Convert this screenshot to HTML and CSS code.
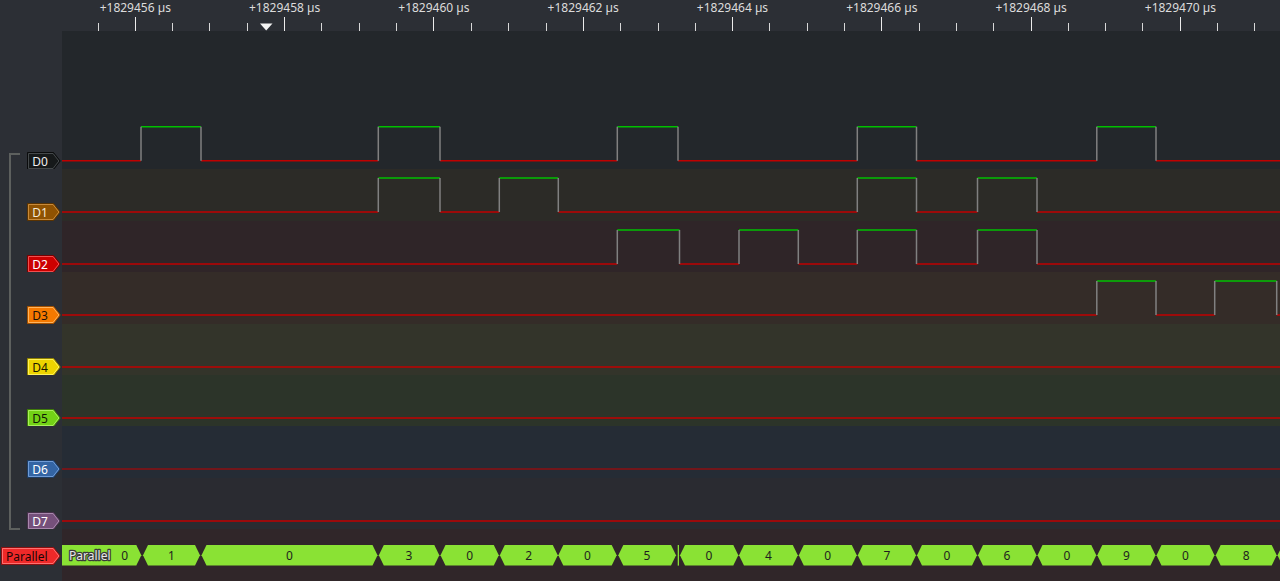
FILE: index.html
```html
<!DOCTYPE html>
<html>
<head>
<meta charset="utf-8">
<link rel="stylesheet" href="styles.css">
</head>
<body>
<div class="app">
  <div class="ruler">
    <svg width="1280" height="31" viewBox="0 0 1280 31">
      <g class="ticks-minor">
        <path d="M98.5 23V31 M172.5 23V31 M209.5 23V31 M247.5 23V31 M321.5 23V31 M359.5 23V31 M396.5 23V31 M471.5 23V31 M508.5 23V31 M546.5 23V31 M620.5 23V31 M658.5 23V31 M695.5 23V31 M769.5 23V31 M807.5 23V31 M844.5 23V31 M919.5 23V31 M956.5 23V31 M993.5 23V31 M1068.5 23V31 M1105.5 23V31 M1142.5 23V31 M1217.5 23V31 M1254.5 23V31"/>
      </g>
      <g class="ticks-major">
        <path d="M135.5 17V31 M284.5 17V31 M433.5 17V31 M583.5 17V31 M732.5 17V31 M881.5 17V31 M1031.5 17V31 M1180.5 17V31"/>
      </g>
      <g class="ruler-text">
        <text x="135.3" y="12">+1829456 µs</text>
        <text x="284.6" y="12">+1829458 µs</text>
        <text x="433.9" y="12">+1829460 µs</text>
        <text x="583.2" y="12">+1829462 µs</text>
        <text x="732.5" y="12">+1829464 µs</text>
        <text x="881.8" y="12">+1829466 µs</text>
        <text x="1031.1" y="12">+1829468 µs</text>
        <text x="1180.4" y="12">+1829470 µs</text>
      </g>
      <polygon class="marker" points="260,23.5 272.5,23.5 266.2,30.5"/>
    </svg>
  </div>

  <div class="traces">
    <div class="bracket"></div>

    <div class="row row-d0">
      <div class="lab lab-d0">
        <svg class="tag tag-d0" width="34" height="18" viewBox="0 0 34 18"><polygon class="o" points="0.5,0.5 26.5,0.5 33.2,9 26.5,17.5 0.5,17.5"/><polygon class="h" points="1.5,1.5 26,1.5 31.9,9 26,16.5 1.5,16.5"/><text x="5.3" y="13.6">D0</text></svg>
      </div>
      <div class="band band-d0">
        <svg width="1218" height="139" viewBox="0 0 1218 139">
          <path class="lo" d="M0 129.7H79 M139 129.7H316.3 M378 129.7H555.3 M616 129.7H795.3 M854.5 129.7H1034.8 M1094 129.7H1218"/>
          <path class="hi" d="M79 95.7H139 M316.3 95.7H378 M555.3 95.7H616 M795.3 95.7H854.5 M1034.8 95.7H1094"/>
          <path class="ed" d="M79 95.7V129.7 M139 95.7V129.7 M316.3 95.7V129.7 M378 95.7V129.7 M555.3 95.7V129.7 M616 95.7V129.7 M795.3 95.7V129.7 M854.5 95.7V129.7 M1034.8 95.7V129.7 M1094 95.7V129.7"/>
        </svg>
      </div>
    </div>

    <div class="row">
      <div class="lab">
        <svg class="tag tag-d1" width="34" height="18" viewBox="0 0 34 18"><polygon class="o" points="0.5,0.5 26.5,0.5 33.2,9 26.5,17.5 0.5,17.5"/><polygon class="h" points="1.5,1.5 26,1.5 31.9,9 26,16.5 1.5,16.5"/><text x="5.3" y="13.6">D1</text></svg>
      </div>
      <div class="band band-d1">
        <svg width="1218" height="52" viewBox="0 0 1218 52">
          <path class="lo" d="M0 43H316.3 M378 43H437.3 M496.3 43H795.3 M854.5 43H915.5 M975 43H1218"/>
          <path class="hi" d="M316.3 9H378 M437.3 9H496.3 M795.3 9H854.5 M915.5 9H975"/>
          <path class="ed" d="M316.3 9V43 M378 9V43 M437.3 9V43 M496.3 9V43 M795.3 9V43 M854.5 9V43 M915.5 9V43 M975 9V43"/>
        </svg>
      </div>
    </div>

    <div class="row">
      <div class="lab">
        <svg class="tag tag-d2" width="34" height="18" viewBox="0 0 34 18"><polygon class="o" points="0.5,0.5 26.5,0.5 33.2,9 26.5,17.5 0.5,17.5"/><polygon class="h" points="1.5,1.5 26,1.5 31.9,9 26,16.5 1.5,16.5"/><text x="5.3" y="13.6">D2</text></svg>
      </div>
      <div class="band band-d2">
        <svg width="1218" height="52" viewBox="0 0 1218 52">
          <path class="lo" d="M0 43H555.3 M617.5 43H677 M736.3 43H795.3 M854.5 43H915.5 M975 43H1218"/>
          <path class="hi" d="M555.3 9H617.5 M677 9H736.3 M795.3 9H854.5 M915.5 9H975"/>
          <path class="ed" d="M555.3 9V43 M617.5 9V43 M677 9V43 M736.3 9V43 M795.3 9V43 M854.5 9V43 M915.5 9V43 M975 9V43"/>
        </svg>
      </div>
    </div>

    <div class="row">
      <div class="lab">
        <svg class="tag tag-d3" width="34" height="18" viewBox="0 0 34 18"><polygon class="o" points="0.5,0.5 26.5,0.5 33.2,9 26.5,17.5 0.5,17.5"/><polygon class="h" points="1.5,1.5 26,1.5 31.9,9 26,16.5 1.5,16.5"/><text x="5.3" y="13.6">D3</text></svg>
      </div>
      <div class="band band-d3">
        <svg width="1218" height="52" viewBox="0 0 1218 52">
          <path class="lo" d="M0 43H1034.8 M1094 43H1152.7 M1214.7 43H1218"/>
          <path class="hi" d="M1034.8 9H1094 M1152.7 9H1214.7"/>
          <path class="ed" d="M1034.8 9V43 M1094 9V43 M1152.7 9V43 M1214.7 9V43"/>
        </svg>
      </div>
    </div>

    <div class="row">
      <div class="lab">
        <svg class="tag tag-d4" width="34" height="18" viewBox="0 0 34 18"><polygon class="o" points="0.5,0.5 26.5,0.5 33.2,9 26.5,17.5 0.5,17.5"/><polygon class="h" points="1.5,1.5 26,1.5 31.9,9 26,16.5 1.5,16.5"/><text x="5.3" y="13.6">D4</text></svg>
      </div>
      <div class="band band-d4">
        <svg width="1218" height="52" viewBox="0 0 1218 52"><path class="lo" d="M0 43H1218"/></svg>
      </div>
    </div>

    <div class="row">
      <div class="lab">
        <svg class="tag tag-d5" width="34" height="18" viewBox="0 0 34 18"><polygon class="o" points="0.5,0.5 26.5,0.5 33.2,9 26.5,17.5 0.5,17.5"/><polygon class="h" points="1.5,1.5 26,1.5 31.9,9 26,16.5 1.5,16.5"/><text x="5.3" y="13.6">D5</text></svg>
      </div>
      <div class="band band-d5">
        <svg width="1218" height="52" viewBox="0 0 1218 52"><path class="lo" d="M0 43H1218"/></svg>
      </div>
    </div>

    <div class="row">
      <div class="lab">
        <svg class="tag tag-d6" width="34" height="18" viewBox="0 0 34 18"><polygon class="o" points="0.5,0.5 26.5,0.5 33.2,9 26.5,17.5 0.5,17.5"/><polygon class="h" points="1.5,1.5 26,1.5 31.9,9 26,16.5 1.5,16.5"/><text x="5.3" y="13.6">D6</text></svg>
      </div>
      <div class="band band-d6">
        <svg width="1218" height="52" viewBox="0 0 1218 52"><path class="lo thin" d="M0 43H1218"/></svg>
      </div>
    </div>

    <div class="row">
      <div class="lab">
        <svg class="tag tag-d7" width="34" height="18" viewBox="0 0 34 18"><polygon class="o" points="0.5,0.5 26.5,0.5 33.2,9 26.5,17.5 0.5,17.5"/><polygon class="h" points="1.5,1.5 26,1.5 31.9,9 26,16.5 1.5,16.5"/><text x="5.3" y="13.6">D7</text></svg>
      </div>
      <div class="band band-d7">
        <svg width="1218" height="52" viewBox="0 0 1218 52"><path class="lo" d="M0 43H1218"/></svg>
      </div>
    </div>

    <div class="row row-par">
      <div class="lab lab-par">
        <svg class="tag tag-par" width="60" height="18" viewBox="0 0 60 18"><polygon class="o" points="0.5,0.5 52.5,0.5 59.2,9 52.5,17.5 0.5,17.5"/><polygon class="h" points="1.5,1.5 52,1.5 57.9,9 52,16.5 1.5,16.5"/><text x="5" y="13.6">Parallel</text></svg>
      </div>
      <div class="band band-par">
        <svg width="1218" height="53" viewBox="0 0 1218 53">
          <g class="seg">
            <polygon points="0,16 74.3,16 79.3,26.3 74.3,36.6 0,36.6"/>
            <polygon points="81,26.3 86,16 133,16 138,26.3 133,36.6 86,36.6"/>
            <polygon points="139.5,26.3 144.5,16 310.5,16 315.5,26.3 310.5,36.6 144.5,36.6"/>
            <polygon points="316.8,26.3 321.8,16 372.3,16 377.3,26.3 372.3,36.6 321.8,36.6"/>
            <polygon points="378.5,26.3 383.5,16 431.8,16 436.8,26.3 431.8,36.6 383.5,36.6"/>
            <polygon points="437.8,26.3 442.8,16 490.8,16 495.8,26.3 490.8,36.6 442.8,36.6"/>
            <polygon points="496.3,26.3 501.3,16 549.7,16 554.7,26.3 549.7,36.6 501.3,36.6"/>
            <polygon points="556.3,26.3 561.3,16 609,16 614,26.3 609,36.6 561.3,36.6"/>
            <rect x="615.7" y="16" width="1.3" height="20.6"/>
            <polygon points="618,26.3 623,16 671.3,16 676.3,26.3 671.3,36.6 623,36.6"/>
            <polygon points="677,26.3 682,16 730.8,16 735.8,26.3 730.8,36.6 682,36.6"/>
            <polygon points="736.8,26.3 741.8,16 789.8,16 794.8,26.3 789.8,36.6 741.8,36.6"/>
            <polygon points="795.8,26.3 800.8,16 849,16 854,26.3 849,36.6 800.8,36.6"/>
            <polygon points="855,26.3 860,16 910,16 915,26.3 910,36.6 860,36.6"/>
            <polygon points="916,26.3 921,16 969.5,16 974.5,26.3 969.5,36.6 921,36.6"/>
            <polygon points="975.5,26.3 980.5,16 1029.3,16 1034.3,26.3 1029.3,36.6 980.5,36.6"/>
            <polygon points="1035.3,26.3 1040.3,16 1088.5,16 1093.5,26.3 1088.5,36.6 1040.3,36.6"/>
            <polygon points="1094.5,26.3 1099.5,16 1147.5,16 1152.5,26.3 1147.5,36.6 1099.5,36.6"/>
            <polygon points="1153.7,26.3 1158.7,16 1209.7,16 1214.7,26.3 1209.7,36.6 1158.7,36.6"/>
            <polygon points="1215.5,26.3 1220.5,16 1275,16 1280,26.3 1275,36.6 1220.5,36.6"/>
          </g>
          <g class="seg-text">
            <text x="62.7" y="30.7">0</text>
            <text x="109.5" y="30.7">1</text>
            <text x="227.5" y="30.7">0</text>
            <text x="347" y="30.7">3</text>
            <text x="407.6" y="30.7">0</text>
            <text x="466.8" y="30.7">2</text>
            <text x="525.5" y="30.7">0</text>
            <text x="585" y="30.7">5</text>
            <text x="647" y="30.7">0</text>
            <text x="706.4" y="30.7">4</text>
            <text x="765.8" y="30.7">0</text>
            <text x="825" y="30.7">7</text>
            <text x="885" y="30.7">0</text>
            <text x="945" y="30.7">6</text>
            <text x="1005" y="30.7">0</text>
            <text x="1064.4" y="30.7">9</text>
            <text x="1123.5" y="30.7">0</text>
            <text x="1184.2" y="30.7">8</text>
          </g>
          <text class="dec-name" x="7" y="30.7">Parallel</text>
        </svg>
      </div>
    </div>
  </div>
</div>
</body>
</html>
```
FILE: styles.css
```css
html, body {
  margin: 0;
  padding: 0;
}
body {
  width: 1280px;
  height: 581px;
  overflow: hidden;
  background: #2c2f35;
  font-family: "Noto Sans", "DejaVu Sans", sans-serif;
}
.app {
  display: flex;
  flex-direction: column;
  width: 1280px;
  height: 581px;
}
.ruler {
  height: 31px;
  flex: none;
  background: #2c2f35;
}
.ruler svg {
  display: block;
}
.ticks-minor path,
.ticks-major path {
  stroke: #d8d8d8;
  stroke-width: 1;
  fill: none;
}
.ticks-major path {
  stroke: #ececec;
}
.ruler-text text {
  font-family: "Noto Sans", sans-serif;
  font-size: 12px;
  fill: #dcdcdc;
  text-anchor: middle;
}
.marker {
  fill: #f4f4f4;
}

.traces {
  position: relative;
  flex: 1;
  display: flex;
  flex-direction: column;
}
.bracket {
  position: absolute;
  left: 8.5px;
  top: 122.3px;
  width: 9px;
  height: 373px;
  border-left: 2.5px solid #5d605e;
  border-top: 2.5px solid #5d605e;
  border-bottom: 2.5px solid #5d605e;
}
.row {
  display: flex;
  height: 51.43px;
  flex: none;
}
.row-d0 {
  height: 138.3px;
}
.row-par {
  height: 53px;
}
.lab {
  width: 62px;
  flex: none;
  display: flex;
  justify-content: flex-end;
  align-items: flex-start;
  padding-top: 34px;
  box-sizing: border-box;
  background: #2c2f35;
}
.lab-d0 {
  padding-top: 120.7px;
}
.lab-par {
  padding-top: 17.4px;
}
.tag {
  display: block;
  margin-right: 1px;
}
.tag text {
  font-family: "Noto Sans", sans-serif;
  font-size: 12px;
}
.tag .o { stroke-width: 1; }
.tag .h { fill: none; stroke-width: 1; }

.tag-d0 .o { fill: #16191a; stroke: #0b0c0d; }
.tag-d0 .h { stroke: #45494b; }
.tag-d0 text { fill: #eeeeee; }

.tag-d1 .o { fill: #8f5202; stroke: #5a3301; }
.tag-d1 .h { stroke: #c88a3a; }
.tag-d1 text { fill: #f4ead8; }

.tag-d2 .o { fill: #cc0000; stroke: #7a0000; }
.tag-d2 .h { stroke: #f05050; }
.tag-d2 text { fill: #ffffff; }

.tag-d3 .o { fill: #f57900; stroke: #a35000; }
.tag-d3 .h { stroke: #ffb45e; }
.tag-d3 text { fill: #1a1008; }

.tag-d4 .o { fill: #edd400; stroke: #8f8000; }
.tag-d4 .h { stroke: #fff25a; }
.tag-d4 text { fill: #1a1700; }

.tag-d5 .o { fill: #73d216; stroke: #3f7a0a; }
.tag-d5 .h { stroke: #a8ef5c; }
.tag-d5 text { fill: #0f1a04; }

.tag-d6 .o { fill: #3465a4; stroke: #1d3c63; }
.tag-d6 .h { stroke: #6f9bd6; }
.tag-d6 text { fill: #ffffff; }

.tag-d7 .o { fill: #75507b; stroke: #46304a; }
.tag-d7 .h { stroke: #a888ad; }
.tag-d7 text { fill: #ffffff; }

.tag-par .o { fill: #ef2929; stroke: #8c1010; }
.tag-par .h { stroke: #ff7070; }
.tag-par text { fill: #1a0505; }

.band {
  flex: 1;
  overflow: hidden;
}
.band svg {
  display: block;
}
.band-d0 { background: #23272b; }
.band-d1 { background: #2c2b27; }
.band-d2 { background: #2f2528; }
.band-d3 { background: #342c28; }
.band-d4 { background: #33342a; }
.band-d5 { background: #2c3429; }
.band-d6 { background: #252c35; }
.band-d7 { background: #2a2b31; }
.band-par { background: #302629; }

.lo {
  fill: none;
  stroke: #c00000;
  stroke-width: 1.5;
}
.lo.thin {
  stroke-width: 1.2;
}
.hi {
  fill: none;
  stroke: #00c000;
  stroke-width: 1.5;
}
.ed {
  fill: none;
  stroke: #808080;
  stroke-width: 1.5;
}
.seg polygon,
.seg rect {
  fill: #8ae234;
}
.seg-text text {
  font-family: "Noto Sans", sans-serif;
  font-size: 12px;
  fill: #1e1e1e;
  text-anchor: middle;
}
.dec-name {
  font-family: "Noto Sans", sans-serif;
  font-size: 12px;
  fill: #e8e8e8;
  stroke: #3a3a3a;
  stroke-width: 2.5;
  stroke-linejoin: round;
  paint-order: stroke;
}
```
